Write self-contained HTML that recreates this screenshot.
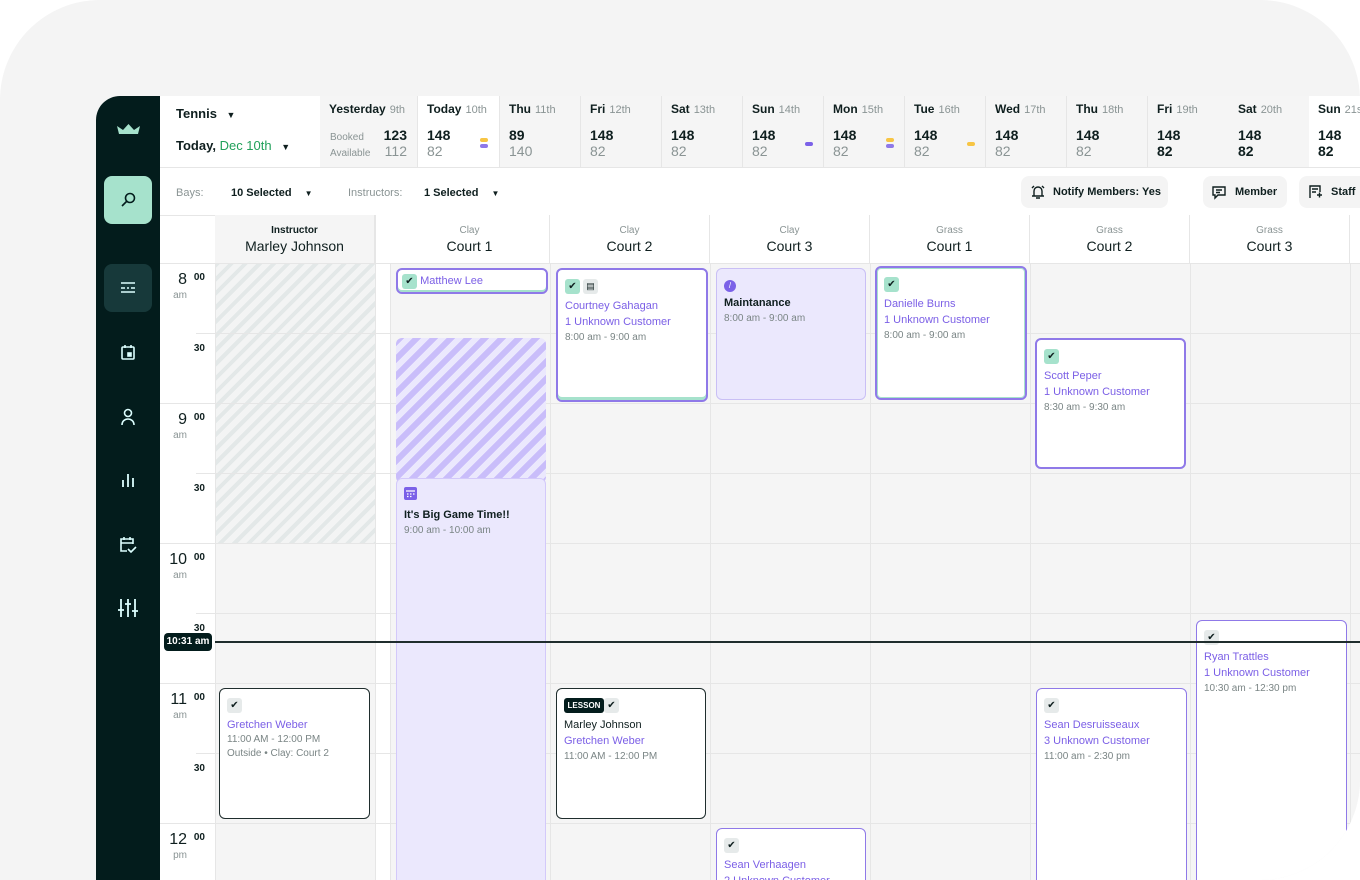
<!DOCTYPE html><html><head><style>
*{box-sizing:border-box;margin:0;padding:0}
body{width:1360px;height:880px;background:#fff;font-family:"Liberation Sans",sans-serif;overflow:hidden;position:relative;color:#0f1f1f}
#outer{position:absolute;left:0;top:0;width:1360px;height:880px;background:#f4f4f4;border-radius:100px 100px 100px 0;overflow:hidden}
#app{position:absolute;left:96px;top:96px;width:1264px;height:784px;background:#fff;border-top-left-radius:24px;overflow:hidden}
.a{position:absolute}
.sb{left:0;top:0;width:64px;height:800px;background:#031c1c}
.dc{position:absolute;top:0;height:71px;border-right:1px solid #e6e6e6;background:#f5f5f5;padding:6px 9px}
.dc .t{font-size:12px;font-weight:bold;color:#0f1f1f}.dc .t span{color:#8a9494;font-weight:normal;font-size:11px;margin-left:4px}
.dc .n{position:absolute;left:9px;top:31px;font-size:14px;font-weight:bold}
.dc .m{position:absolute;left:9px;top:47px;font-size:14px;color:#8a9494}
.grid{background:#f5f5f5}
.hl{position:absolute;height:1px;background:#e6e6e6}
.vl{position:absolute;width:1px;background:#e6e6e6}
.ch{position:absolute;top:119px;height:48px;text-align:center;border-right:1px solid #e6e6e6;background:#fff}
.ch .s{font-size:10px;color:#8a9494;margin-top:10px}.ch .b{font-size:14px;margin-top:2px}
.tm{position:absolute;left:64px;width:55px;text-align:right}
.tm .h{font-size:16px;position:absolute;right:28px}.tm .z{font-size:10px;font-weight:bold;position:absolute;right:10px}
.tm .ap{font-size:10px;color:#8a9494;position:absolute;right:28px}
.ev{position:absolute;border-radius:6px;background:#fff;padding:8px 7px;font-size:11px;line-height:16px}
.pu{color:#7b5fe6}.gr{color:#7a8585}
.ck{display:inline-block;width:15px;height:15px;border-radius:3px;background:#e6eaea;text-align:center;font-size:10px;line-height:15px;color:#0f1f1f;margin-bottom:4px}
.ckg{background:#a6e2cc}
.btn{position:absolute;top:80px;height:32px;background:#f4f4f4;border-radius:8px;font-size:12px;font-weight:bold;line-height:32px;padding-left:32px}
</style></head><body><div id="outer"><div id="app">
<div class="a sb">
 <svg class="a" style="left:20px;top:28px" width="25" height="12" viewBox="0 0 25 12"><path d="M1 2 L7 6 L12.5 0 L18 6 L24 2 L22 10 L3 10Z" fill="#a6e2cc"/></svg>
 <div class="a" style="left:8px;top:80px;width:48px;height:48px;border-radius:8px;background:#a6e2cc"></div>
 <svg class="a" style="left:23px;top:95px" width="18" height="18" viewBox="0 0 18 18" fill="none" stroke="#031c1c" stroke-width="1.6"><circle cx="11" cy="7" r="4.5"/><path d="M8 10 L3 15"/></svg>
 <div class="a" style="left:8px;top:168px;width:48px;height:48px;border-radius:8px;background:#17393a"></div>
 <svg class="a" style="left:23px;top:184px" width="18" height="16" viewBox="0 0 18 16" stroke="#dff" stroke-width="1.6"><path d="M2 3h14M2 8h4M8 8h2M12 8h4M2 12h14"/></svg>
 <svg class="a" style="left:24px;top:248px" width="16" height="17" viewBox="0 0 16 17" fill="none" stroke="#dff" stroke-width="1.6"><rect x="2" y="3" width="12" height="12" rx="1"/><path d="M5 1v3M11 1v3"/><rect x="8" y="9" width="3" height="3" fill="#dff"/></svg>
 <svg class="a" style="left:24px;top:312px" width="16" height="18" viewBox="0 0 16 18" fill="none" stroke="#dff" stroke-width="1.6"><circle cx="8" cy="5" r="3.5"/><path d="M2 17c0-4 3-6 6-6s6 2 6 6"/></svg>
 <svg class="a" style="left:24px;top:376px" width="16" height="16" viewBox="0 0 16 16" stroke="#dff" stroke-width="1.8"><path d="M3 15V8M8 15V2M13 15V6"/></svg>
 <svg class="a" style="left:22px;top:440px" width="20" height="18" viewBox="0 0 20 18" fill="none" stroke="#dff" stroke-width="1.6"><path d="M9 15H3V3h12v5M3 7h12M6 1v3M12 1v3M10 13l3 3 5-5"/></svg>
 <svg class="a" style="left:21px;top:502px" width="22" height="20" viewBox="0 0 22 20" stroke="#dff" stroke-width="1.8"><path d="M4 1v18M11 1v18M18 1v18M1 12h6M8 6h6M15 13h6"/></svg>
</div>
<div class="a" style="left:80px;top:10px;font-size:13px;font-weight:bold">Tennis <span style="font-size:9px;margin-left:6px">▼</span></div>
<div class="a" style="left:80px;top:42px;font-size:13px;font-weight:bold">Today, <span style="color:#21a05a;font-weight:normal">Dec 10th</span> <span style="font-size:9px;margin-left:6px">▼</span></div>
<div class="dc" style="left:224px;width:98px"><div class="t">Yesterday<span>9th</span></div><div class="a" style="left:10px;top:34px;font-size:10px;color:#8a9494;line-height:16px">Booked<br>Available</div><div class="a" style="right:10px;top:31px;font-size:14px;font-weight:bold;text-align:right">123<br><span style="color:#8a9494;font-weight:normal">112</span></div></div>
<div class="dc" style="left:322px;width:82px;background:#fff"><div class="t">Today<span>10th</span></div><div class="n">148</div><div class="m">82</div><div class="a" style="left:62px;top:42px;width:8px;height:4px;border-radius:2px;background:#f7c544"></div><div class="a" style="left:62px;top:48px;width:8px;height:4px;border-radius:2px;background:#8f79e8"></div></div>
<div class="dc" style="left:404px;width:81px"><div class="t">Thu<span>11th</span></div><div class="n">89</div><div class="m">140</div></div>
<div class="dc" style="left:485px;width:81px"><div class="t">Fri<span>12th</span></div><div class="n">148</div><div class="m">82</div></div>
<div class="dc" style="left:566px;width:81px"><div class="t">Sat<span>13th</span></div><div class="n">148</div><div class="m">82</div></div>
<div class="dc" style="left:647px;width:81px"><div class="t">Sun<span>14th</span></div><div class="n">148</div><div class="m">82</div><div class="a" style="left:62px;top:46px;width:8px;height:4px;border-radius:2px;background:#7b61e8"></div></div>
<div class="dc" style="left:728px;width:81px"><div class="t">Mon<span>15th</span></div><div class="n">148</div><div class="m">82</div><div class="a" style="left:62px;top:42px;width:8px;height:4px;border-radius:2px;background:#f7c544"></div><div class="a" style="left:62px;top:48px;width:8px;height:4px;border-radius:2px;background:#8f79e8"></div></div>
<div class="dc" style="left:809px;width:81px"><div class="t">Tue<span>16th</span></div><div class="n">148</div><div class="m">82</div><div class="a" style="left:62px;top:46px;width:8px;height:4px;border-radius:2px;background:#f7c544"></div></div>
<div class="dc" style="left:890px;width:81px"><div class="t">Wed<span>17th</span></div><div class="n">148</div><div class="m">82</div></div>
<div class="dc" style="left:971px;width:81px"><div class="t">Thu<span>18th</span></div><div class="n">148</div><div class="m">82</div></div>
<div class="dc" style="left:1052px;width:81px;border:none"><div class="t">Fri<span>19th</span></div><div class="n">148</div><div class="m" style="color:#0f1f1f;font-weight:bold">82</div></div>
<div class="dc" style="left:1133px;width:80px;border:none"><div class="t">Sat<span>20th</span></div><div class="n">148</div><div class="m" style="color:#0f1f1f;font-weight:bold">82</div></div>
<div class="dc" style="left:1213px;width:90px;border:none;background:#fff"><div class="t">Sun<span>21st</span></div><div class="n">148</div><div class="m" style="color:#0f1f1f;font-weight:bold">82</div></div>
<div class="hl" style="left:64px;top:71px;width:1240px"></div>
<div class="a" style="left:80px;top:91px;font-size:11px;color:#8a9494">Bays:</div>
<div class="a" style="left:135px;top:91px;font-size:11px;font-weight:bold">10 Selected <span style="font-size:8px;margin-left:10px">▼</span></div>
<div class="a" style="left:252px;top:91px;font-size:11px;color:#8a9494">Instructors:</div>
<div class="a" style="left:328px;top:91px;font-size:11px;font-weight:bold">1 Selected <span style="font-size:8px;margin-left:10px">▼</span></div>
<div class="btn" style="left:925px;width:147px;font-size:11px">Notify Members: Yes</div>
<svg class="a" style="left:934px;top:88px" width="16" height="16" viewBox="0 0 16 16" fill="none" stroke="#0f1f1f" stroke-width="1.4"><path d="M4 12V7a4 4 0 0 1 8 0v5M2 12h12M6 14h4M2 4l2-2M14 4l-2-2"/></svg>
<div class="btn" style="left:1107px;width:84px;font-size:11px">Member</div>
<svg class="a" style="left:1115px;top:88px" width="16" height="16" viewBox="0 0 16 16" fill="none" stroke="#0f1f1f" stroke-width="1.4"><path d="M2 3h12v8H7l-3 3v-3H2zM5 6h6M5 8.5h4"/></svg>
<div class="btn" style="left:1203px;width:100px;font-size:11px">Staff</div>
<svg class="a" style="left:1211px;top:88px" width="16" height="16" viewBox="0 0 16 16" fill="none" stroke="#0f1f1f" stroke-width="1.4"><path d="M3 14V2h10v6M5 5h6M5 8h4M10 11h5M12.5 8.5v5"/></svg>
<div class="hl" style="left:64px;top:119px;width:1240px"></div>
<div class="a grid" style="left:119px;top:167px;width:1190px;height:640px"></div>
<div class="a" style="left:279px;top:119px;width:15px;height:700px;background:#fff"></div>
<div class="a" style="left:119px;top:167px;width:160px;height:280px;background:repeating-linear-gradient(135deg,#e3e8e8 0 4px,#f3f4f4 4px 10px)"></div>
<div class="vl" style="left:119px;top:119px;height:700px"></div>
<div class="vl" style="left:279px;top:119px;height:700px"></div>
<div class="vl" style="left:294px;top:119px;height:700px"></div>
<div class="vl" style="left:454px;top:167px;height:700px"></div>
<div class="vl" style="left:614px;top:167px;height:700px"></div>
<div class="vl" style="left:774px;top:167px;height:700px"></div>
<div class="vl" style="left:934px;top:167px;height:700px"></div>
<div class="vl" style="left:1094px;top:167px;height:700px"></div>
<div class="vl" style="left:1254px;top:167px;height:700px"></div>
<div class="hl" style="left:64px;top:167px;width:1240px"></div>
<div class="hl" style="left:100px;top:237px;width:1200px"></div>
<div class="hl" style="left:64px;top:307px;width:1240px"></div>
<div class="hl" style="left:100px;top:377px;width:1200px"></div>
<div class="hl" style="left:64px;top:447px;width:1240px"></div>
<div class="hl" style="left:100px;top:517px;width:1200px"></div>
<div class="hl" style="left:64px;top:587px;width:1240px"></div>
<div class="hl" style="left:100px;top:657px;width:1200px"></div>
<div class="hl" style="left:64px;top:727px;width:1240px"></div>
<div class="ch" style="left:119px;width:160px;background:#f5f5f5"><div class="s" style="font-weight:bold;color:#0f1f1f">Instructor</div><div class="b">Marley Johnson</div></div>
<div class="ch" style="left:294px;width:160px"><div class="s">Clay</div><div class="b">Court 1</div></div>
<div class="ch" style="left:454px;width:160px"><div class="s">Clay</div><div class="b">Court 2</div></div>
<div class="ch" style="left:614px;width:160px"><div class="s">Clay</div><div class="b">Court 3</div></div>
<div class="ch" style="left:774px;width:160px"><div class="s">Grass</div><div class="b">Court 1</div></div>
<div class="ch" style="left:934px;width:160px"><div class="s">Grass</div><div class="b">Court 2</div></div>
<div class="ch" style="left:1094px;width:160px"><div class="s">Grass</div><div class="b">Court 3</div></div>
<div class="ch" style="left:1254px;width:60px"></div>
<div class="tm" style="top:167px"><span class="h" style="top:8px">8</span><span class="z" style="top:9px">00</span><span class="ap" style="top:27px">am</span></div>
<div class="tm" style="top:237px"><span class="z" style="top:10px">30</span></div>
<div class="tm" style="top:307px"><span class="h" style="top:8px">9</span><span class="z" style="top:9px">00</span><span class="ap" style="top:27px">am</span></div>
<div class="tm" style="top:377px"><span class="z" style="top:10px">30</span></div>
<div class="tm" style="top:447px"><span class="h" style="top:8px">10</span><span class="z" style="top:9px">00</span><span class="ap" style="top:27px">am</span></div>
<div class="tm" style="top:517px"><span class="z" style="top:10px">30</span></div>
<div class="tm" style="top:587px"><span class="h" style="top:8px">11</span><span class="z" style="top:9px">00</span><span class="ap" style="top:27px">am</span></div>
<div class="tm" style="top:657px"><span class="z" style="top:10px">30</span></div>
<div class="tm" style="top:727px"><span class="h" style="top:8px">12</span><span class="z" style="top:9px">00</span><span class="ap" style="top:27px">pm</span></div>
<div class="ev" style="left:300px;top:172px;width:152px;height:26px;border:2px solid #8f79e8;box-shadow:inset 0 -2px 0 #a6e2cc;padding:3px 4px;font-size:11px"><span class="ck ckg">✔</span> <span class="pu">Matthew Lee</span></div>
<div class="a" style="left:300px;top:242px;width:150px;height:145px;border-radius:6px;background:repeating-linear-gradient(135deg,#c9bdfa 0 6px,#ebe8fd 6px 12px)"></div>
<div class="ev" style="left:300px;top:382px;width:150px;height:420px;background:#ebe8fd;border:1px solid #d3c9fa"><svg width="13" height="13" viewBox="0 0 13 13"><rect width="13" height="13" rx="2" fill="#7b61e8"/><path d="M2 4h9M3 7h1.5M6 7h1.5M9 7h1.5M3 9.5h1.5M6 9.5h1.5" stroke="#fff" stroke-width="1.2"/></svg><div style="font-weight:bold;margin-top:2px">It's Big Game Time!!</div><div class="gr" style="font-size:10px">9:00 am - 10:00 am</div></div>
<div class="ev" style="left:460px;top:172px;width:152px;height:134px;border:2px solid #8f79e8;box-shadow:inset 0 -3px 0 #a6e2cc"><span class="ck ckg">✔</span> <span class="ck" style="font-size:9px">▤</span><div class="pu">Courtney Gahagan</div><div class="pu">1 Unknown Customer</div><div class="gr" style="font-size:10px">8:00 am - 9:00 am</div></div>
<div class="ev" style="left:620px;top:172px;width:150px;height:132px;background:#ebe8fd;border:1px solid #c9bff5"><span style="display:inline-block;width:12px;height:12px;border-radius:50%;background:#7b61e8;color:#fff;font-size:8px;text-align:center;line-height:12px">/</span><div style="font-weight:bold;margin-top:2px">Maintanance</div><div class="gr" style="font-size:10px">8:00 am - 9:00 am</div></div>
<div class="ev" style="left:779px;top:170px;width:152px;height:134px;border:2px solid #8f79e8;box-shadow:inset 0 0 0 1px #a6e2cc"><span class="ck ckg">✔</span><div class="pu">Danielle Burns</div><div class="pu">1 Unknown Customer</div><div class="gr" style="font-size:10px">8:00 am - 9:00 am</div></div>
<div class="ev" style="left:939px;top:242px;width:151px;height:131px;border:2px solid #8f79e8"><span class="ck ckg">✔</span><div class="pu">Scott Peper</div><div class="pu">1 Unknown Customer</div><div class="gr" style="font-size:10px">8:30 am - 9:30 am</div></div>
<div class="ev" style="left:1100px;top:524px;width:151px;height:300px;border:1.5px solid #8f79e8"><span class="ck">✔</span><div class="pu">Ryan Trattles</div><div class="pu">1 Unknown Customer</div><div class="gr" style="font-size:10px">10:30 am - 12:30 pm</div></div>
<div class="ev" style="left:123px;top:592px;width:151px;height:131px;border:1.5px solid #1f2d2d"><span class="ck">✔</span><div class="pu">Gretchen Weber</div><div class="gr" style="font-size:10px;line-height:14px">11:00 AM - 12:00 PM<br>Outside • Clay: Court 2</div></div>
<div class="ev" style="left:460px;top:592px;width:150px;height:131px;border:1.5px solid #1f2d2d"><span class="ck" style="background:#031c1c;color:#fff;width:40px;font-size:8px;font-weight:bold">LESSON</span><span class="ck">✔</span><div>Marley Johnson</div><div class="pu">Gretchen Weber</div><div class="gr" style="font-size:10px">11:00 AM - 12:00 PM</div></div>
<div class="ev" style="left:940px;top:592px;width:151px;height:220px;border:1.5px solid #8f79e8"><span class="ck">✔</span><div class="pu">Sean Desruisseaux</div><div class="pu">3 Unknown Customer</div><div class="gr" style="font-size:10px">11:00 am - 2:30 pm</div></div>
<div class="ev" style="left:620px;top:732px;width:150px;height:100px;border:1.5px solid #8f79e8"><span class="ck">✔</span><div class="pu">Sean Verhaagen</div><div class="pu">2 Unknown Customer</div></div>
<div class="a" style="left:119px;top:545px;width:1200px;height:2px;background:#1f2d2d"></div>
<div class="a" style="left:68px;top:537px;width:48px;height:18px;border-radius:4px;background:#031c1c;color:#fff;font-size:10px;font-weight:bold;line-height:18px;text-align:center">10:31 am</div>
</div></div></body></html>
